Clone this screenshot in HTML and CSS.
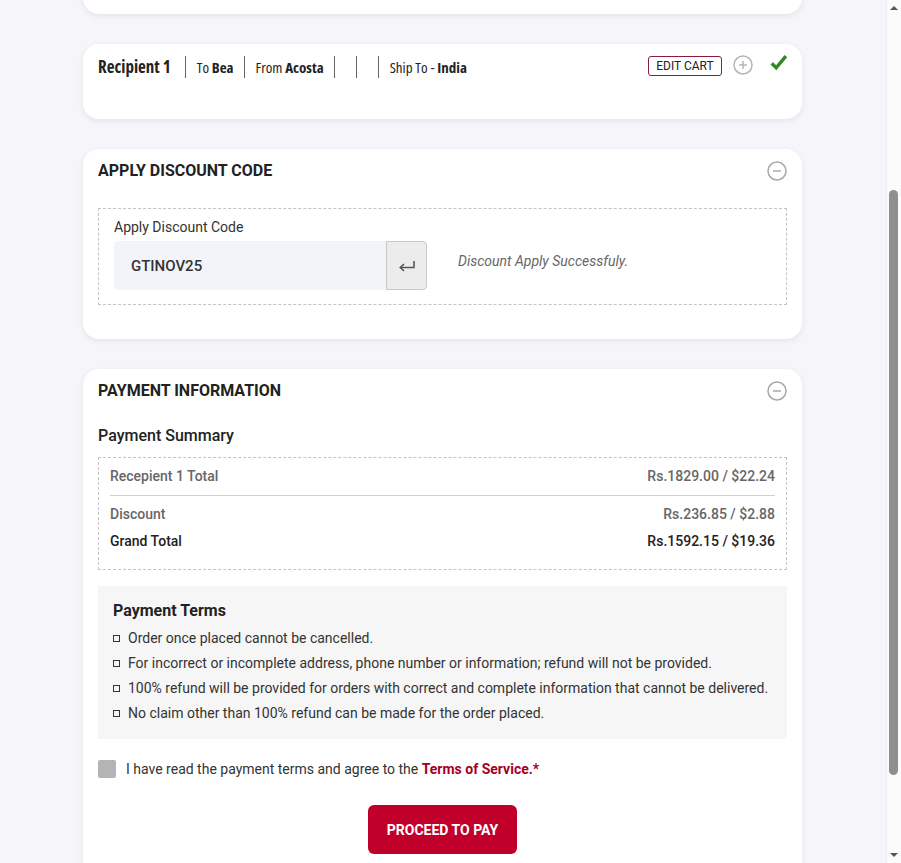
FILE: index.html
```html
<!DOCTYPE html>
<html lang="en">
<head>
<meta charset="UTF-8" />
<meta name="viewport" content="width=device-width, initial-scale=1" />
<title>Checkout — Payment</title>
<link rel="stylesheet" href="styles.css">
</head>
<body>

<main class="checkout">

  <!-- Order card (scrolled above) -->
  <section class="card order-card" aria-label="Order details"></section>

  <!-- Recipient -->
  <section class="card recipient-card">
    <div class="recipient-row">
      <span class="rc-item rc-name">Recipient 1</span>
      <span class="rc-item">To <b>Bea</b></span>
      <span class="rc-item">From <b>Acosta</b></span>
      <span class="rc-item"></span>
      <span class="rc-item"></span>
      <span class="rc-item">Ship To - <b>India</b></span>
    </div>
    <div class="recipient-actions">
      <button class="edit-cart">EDIT CART</button>
      <svg class="circle-icon" width="20" height="20" viewBox="0 0 20 20" aria-hidden="true">
        <circle cx="10" cy="10" r="9" fill="none" stroke="#b5b5b5" stroke-width="1.5"/>
        <path d="M10 6v8M6 10h8" stroke="#b5b5b5" stroke-width="1.5" fill="none"/>
      </svg>
      <svg class="check-icon" width="19" height="18" viewBox="0 0 19 18" aria-hidden="true">
        <path d="M1.5 10.5l2.6-2.4 3 3.2L15.6 1l2.6 2.2L7.3 16.2z" fill="#2f8a1f"/>
        <path d="M1.5 10.5l2.6-2.4 3 3.2" fill="none" stroke="#bfcfbb" stroke-width="0.8"/>
      </svg>
    </div>
  </section>

  <!-- Discount -->
  <section class="card discount-card">
    <div class="card-head">
      <h2>APPLY DISCOUNT CODE</h2>
      <svg class="circle-icon" width="20" height="20" viewBox="0 0 20 20" aria-hidden="true">
        <circle cx="10" cy="10" r="9" fill="none" stroke="#a8a8a8" stroke-width="1.5"/>
        <path d="M6 10h8" stroke="#a8a8a8" stroke-width="1.5"/>
      </svg>
    </div>
    <div class="dashed-box discount-box">
      <label class="discount-label" for="discountCode">Apply Discount Code</label>
      <div class="discount-row">
        <div class="discount-field">
          <input type="text" id="discountCode" value="GTINOV25" />
          <button class="apply-btn" aria-label="Apply code">
            <svg width="20" height="14" viewBox="0 0 20 14" aria-hidden="true">
              <path d="M17 2v6.5H3.5" fill="none" stroke="#555" stroke-width="1.6"/>
              <path d="M7 5L3.3 8.5 7 12" fill="none" stroke="#555" stroke-width="1.6"/>
            </svg>
          </button>
        </div>
        <p class="discount-msg">Discount Apply Successfuly.</p>
      </div>
    </div>
  </section>

  <!-- Payment -->
  <section class="card payment-card">
    <div class="card-head">
      <h2>PAYMENT INFORMATION</h2>
      <svg class="circle-icon" width="20" height="20" viewBox="0 0 20 20" aria-hidden="true">
        <circle cx="10" cy="10" r="9" fill="none" stroke="#a8a8a8" stroke-width="1.5"/>
        <path d="M6 10h8" stroke="#a8a8a8" stroke-width="1.5"/>
      </svg>
    </div>

    <h3 class="summary-title">Payment Summary</h3>
    <div class="dashed-box summary-box">
      <div class="sum-row first">
        <span>Recepient 1 Total</span>
        <span>Rs.1829.00 / $22.24</span>
      </div>
      <div class="sum-row">
        <span>Discount</span>
        <span>Rs.236.85 / $2.88</span>
      </div>
      <div class="sum-row grand">
        <span>Grand Total</span>
        <span>Rs.1592.15 / $19.36</span>
      </div>
    </div>

    <div class="terms">
      <h3>Payment Terms</h3>
      <ul>
        <li>Order once placed cannot be cancelled.</li>
        <li>For incorrect or incomplete address, phone number or information; refund will not be provided.</li>
        <li>100% refund will be provided for orders with correct and complete information that cannot be delivered.</li>
        <li>No claim other than 100% refund can be made for the order placed.</li>
      </ul>
    </div>

    <label class="agree">
      <span class="agree-box"></span>
      <span>I have read the payment terms and agree to the <a href="#">Terms of Service.*</a></span>
    </label>

    <div class="pay-wrap">
      <button class="pay-btn">PROCEED TO PAY</button>
    </div>
  </section>

</main>

<!-- window scrollbar as seen in the capture -->
<div class="scrollbar" aria-hidden="true">
  <span class="sb-arrow up"></span>
  <span class="sb-thumb"></span>
  <span class="sb-arrow down"></span>
</div>

<script src="script.js"></script>
</body>
</html>
```

FILE: styles.css
```css
html, body { margin: 0; }
body {
  font-family: 'Roboto', 'Noto Sans', Arial, sans-serif;
  background: #f5f5fa;
  color: #222;
  padding-right: 16px;
}
.checkout {
  max-width: 719px;
  margin: 0 auto;
  padding: 30px 0 87px;
  display: flex; flex-direction: column; gap: 30px;
}
.card {
  background: #fff;
  border-radius: 16px;
  box-shadow: 0 2px 6px rgba(0,0,0,0.07);
  padding: 0 15px 33px;
}
.order-card { min-height: 242px; padding: 0; }

/* Recipient */
.recipient-card {
  display: flex; justify-content: space-between; align-items: flex-start;
  padding: 12px 14px 41px 15px;
}
.recipient-row {
  display: flex; align-items: center;
  font-family: 'Open Sans', 'Roboto', sans-serif;
  font-stretch: 75%;
  font-size: 15px; color: #222;
}
.rc-item {
  height: 22px; line-height: 22px;
  padding: 0 10px 0 11px;
  border-left: 1px solid #666;
}
.rc-item b { font-weight: 700; }
.rc-name {
  border-left: none; padding: 0 14px 0 0;
  font-size: 17px; font-weight: 700;
}
.recipient-actions { display: flex; align-items: flex-start; gap: 11px; }
.edit-cart {
  font-family: 'Roboto', sans-serif;
  font-size: 12px; color: #222;
  background: #fff;
  border: 1px solid #8c1c3c; border-radius: 3px;
  height: 20px; width: 74px; padding: 0;
  cursor: pointer;
}
.recipient-actions .circle-icon { margin-top: -1px; }
.check-icon { margin: -2px 0 0 5px; }

/* Card header */
.card-head {
  display: flex; justify-content: space-between; align-items: center;
  padding-top: 12px; height: 20px;
}
.card-head h2 {
  margin: 0; font-size: 16px; font-weight: 700; line-height: 20px;
  color: #222;
}
.dashed-box { border: 1px dashed #c4c4c4; }

/* Discount */
.discount-card { padding-bottom: 34px; }
.discount-box { margin-top: 27px; padding: 10px 15px 14px; }
.discount-label { display: block; font-size: 14px; line-height: 16px; color: #333; margin-bottom: 6px; }
.discount-row { display: flex; align-items: flex-start; gap: 31px; }
.discount-field { display: flex; }
.discount-field input {
  width: 272px; height: 49px; box-sizing: border-box;
  border: none; border-radius: 4px 0 0 4px;
  background: #f3f4f9;
  padding: 0 17px;
  font-family: 'Roboto', sans-serif; font-size: 15px; font-weight: 500; color: #333;
  outline: none;
}
.apply-btn {
  width: 41px; height: 49px; box-sizing: border-box;
  background: #ececec;
  border: 1px solid #c9c9c9; border-radius: 0 4px 4px 0;
  display: flex; align-items: center; justify-content: center;
  padding: 0; cursor: pointer;
}
.discount-msg { margin: 12px 0 0; font-size: 14px; line-height: 16px; font-style: italic; color: #666; }

/* Payment */
.payment-card { padding-bottom: 30px; }
.summary-title { margin: 25px 0 11px; font-size: 16px; font-weight: 500; line-height: 20px; color: #222; }
.summary-box { padding: 8px 11px 18px; }
.sum-row {
  display: flex; justify-content: space-between;
  font-size: 14px; font-weight: 500; line-height: 20px; color: #666;
  margin-top: 7px;
}
.sum-row.first {
  margin-top: 0;
  padding-bottom: 9px; border-bottom: 1px solid #cfcfcf;
  margin-bottom: 8px;
}
.sum-row.first + .sum-row { margin-top: 0; }
.sum-row.grand { color: #222; }

.terms {
  background: #f6f6f6;
  margin-top: 16px;
  padding: 15px 15px 13px;
}
.terms h3 { margin: 0 0 5px; font-size: 16px; font-weight: 700; line-height: 20px; color: #222; }
.terms ul { list-style: none; margin: 0; padding: 0; }
.terms li {
  display: flex; align-items: center; gap: 8px;
  font-size: 14px; line-height: 25px; color: #333;
}
.terms li::before {
  content: ''; width: 5px; height: 5px; flex: none;
  border: 1px solid #333;
}

.agree {
  display: flex; align-items: center; gap: 10px;
  margin-top: 21px;
  font-size: 14px; color: #333;
}
.agree-box { width: 18px; height: 18px; background: #b4b4b4; border-radius: 2px; flex: none; }
.agree a { color: #a7001f; font-weight: 700; text-decoration: none; }

.pay-wrap { display: flex; justify-content: center; margin-top: 27px; }
.pay-btn {
  width: 149px; height: 49px;
  background: #c0002a; color: #fff;
  border: none; border-radius: 6px;
  font-family: 'Roboto', sans-serif; font-size: 14px; font-weight: 700;
  cursor: pointer;
}

/* Scrollbar */
.scrollbar {
  position: fixed; top: 0; right: 0; bottom: 0; width: 15px;
  background: #fbfbfb;
  border-left: 1px solid #efefef;
  box-sizing: border-box;
}
.sb-thumb {
  position: absolute; left: 2px; top: 190px;
  width: 9px; height: 585px;
  background: #8f8f8f; border-radius: 5px;
}
.sb-arrow {
  position: absolute; left: 3px;
  width: 0; height: 0;
  border-left: 4px solid transparent; border-right: 4px solid transparent;
}
.sb-arrow.up { top: 6px; border-bottom: 4px solid #555; }
.sb-arrow.down { bottom: 6px; border-top: 4px solid #555; }
```

FILE: script.js
```js
// keep the checkout scrolled to the payment section
window.scrollTo(0, 258);
window.addEventListener('load', () => window.scrollTo(0, 258));
```
